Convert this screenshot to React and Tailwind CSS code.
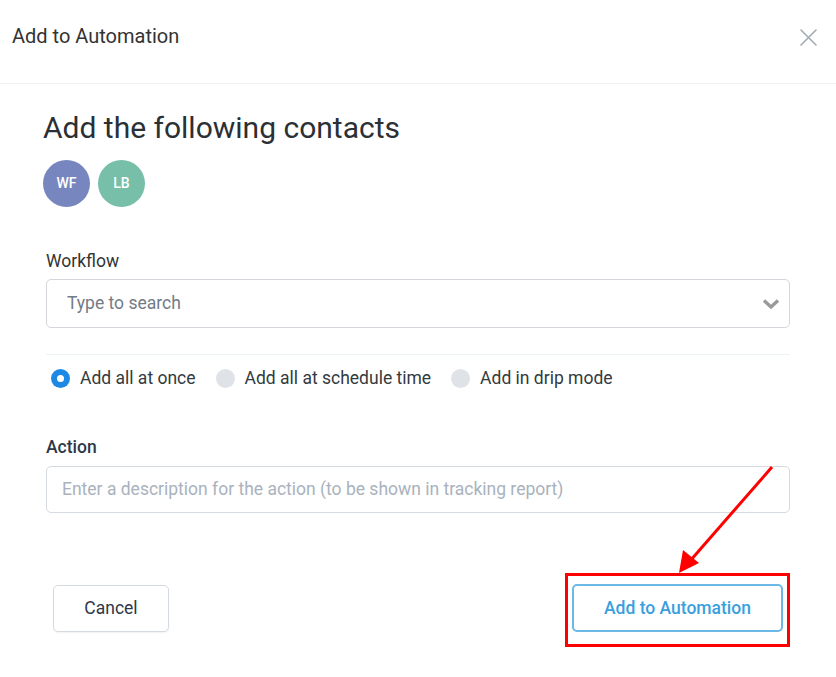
import React, { useState } from 'react';

// --- Options for the radio row ---
const MODES = [
  { id: 'once', label: 'Add all at once' },
  { id: 'schedule', label: 'Add all at schedule time' },
  { id: 'drip', label: 'Add in drip mode' },
];

const CONTACTS = [
  { initials: 'WF', color: 'bg-[#7886c0]' },
  { initials: 'LB', color: 'bg-[#77bfa8]' },
];

const Radio = ({ checked, label, onClick }) => (
  <button type="button" onClick={onClick} className="flex items-center gap-[10px] h-6 mr-[20px]">
    {checked ? (
      <span className="w-[19px] h-[19px] rounded-full bg-[#1e88e5] flex items-center justify-center">
        <span className="w-[7px] h-[7px] rounded-full bg-white" />
      </span>
    ) : (
      <span className="w-[19px] h-[19px] rounded-full bg-[#dfe2e7]" />
    )}
    <span className="text-[17.5px] text-[#333a40]">{label}</span>
  </button>
);

export default function App() {
  const [mode, setMode] = useState('once');

  return (
    <div className="relative w-[836px] h-[677px] bg-white font-['Roboto',sans-serif] overflow-hidden">
      {/* Header */}
      <div className="h-[84px] border-b border-[#eef2f5] flex items-start justify-between pt-[24px] pl-[12px] pr-[19px]">
        <h1 className="text-[20px] leading-6 text-[#333]">Add to Automation</h1>
        <button type="button" className="mt-[5px]" aria-label="Close">
          <svg width="17" height="17" viewBox="0 0 17 17" stroke="#a3abb3" strokeWidth="1.6" strokeLinecap="round">
            <path d="M1 1 L16 16 M16 1 L1 16" />
          </svg>
        </button>
      </div>

      {/* Body */}
      <div className="pl-[43px] pr-[46px] pt-[27px]">
        <h2 className="text-[30px] leading-[34px] text-[#2b3035]">Add the following contacts</h2>
        <div className="flex gap-[8px] mt-[15px]">
          {CONTACTS.map((c) => (
            <div
              key={c.initials}
              className={`w-[47px] h-[47px] rounded-full ${c.color} flex items-center justify-center text-white text-[14px] font-medium`}
            >
              {c.initials}
            </div>
          ))}
        </div>

        <div className="ml-[3px] mt-[42px]">
          <label className="block text-[17.5px] leading-6 text-[#333]">Workflow</label>
          <div className="mt-[6px] h-[49px] border border-[#d3d7dc] rounded-[5px] flex items-center justify-between pl-[20px] pr-[9px]">
            <span className="text-[17.5px] text-[#737b86]">Type to search</span>
            <svg width="18" height="12" viewBox="0 0 18 12" fill="none" stroke="#9a9a9a" strokeWidth="3.4" strokeLinejoin="miter">
              <path d="M2 2.5 L9 9 L16 2.5" />
            </svg>
          </div>

          <div className="mt-[26px] border-t border-[#eef4f4]" />

          <div className="flex items-center mt-[11px] pl-[5px]">
            {MODES.map((m) => (
              <Radio key={m.id} label={m.label} checked={mode === m.id} onClick={() => setMode(m.id)} />
            ))}
          </div>

          <label className="block mt-[45px] text-[17.5px] leading-6 font-medium text-[#2d3748]">Action</label>
          <div className="mt-[7px] h-[47px] border border-[#d6dbe2] rounded-[5px] flex items-center pl-[15px]">
            <span className="text-[17.5px] text-[#a9b2bd]">Enter a description for the action (to be shown in tracking report)</span>
          </div>
        </div>

        {/* Footer */}
        <div className="flex items-start justify-between mt-[60px] pl-[10px]">
          <button
            type="button"
            className="mt-[12px] w-[116px] h-[47px] border border-[#d5d9e0] rounded-[5px] text-[17.5px] text-[#2d3748] shadow-[0_1px_2px_rgba(0,0,0,0.06)]"
          >
            Cancel
          </button>
          <div className="border-[3px] border-[#ff0000] pt-[8px] pb-[12px] px-[4px]">
            <button
              type="button"
              className="w-[211px] h-[48px] border-2 border-[#6cb8e6] rounded-[5px] text-[17.5px] font-medium text-[#3a9fdd]"
            >
              Add to Automation
            </button>
          </div>
        </div>
      </div>

      {/* Annotation arrow */}
      <svg className="absolute left-0 top-0 pointer-events-none" width="836" height="677">
        <line x1="772" y1="467" x2="690" y2="561" stroke="#ff0000" strokeWidth="3" />
        <polygon points="679,573 683,550 699,563" fill="#ff0000" />
      </svg>
    </div>
  );
}
